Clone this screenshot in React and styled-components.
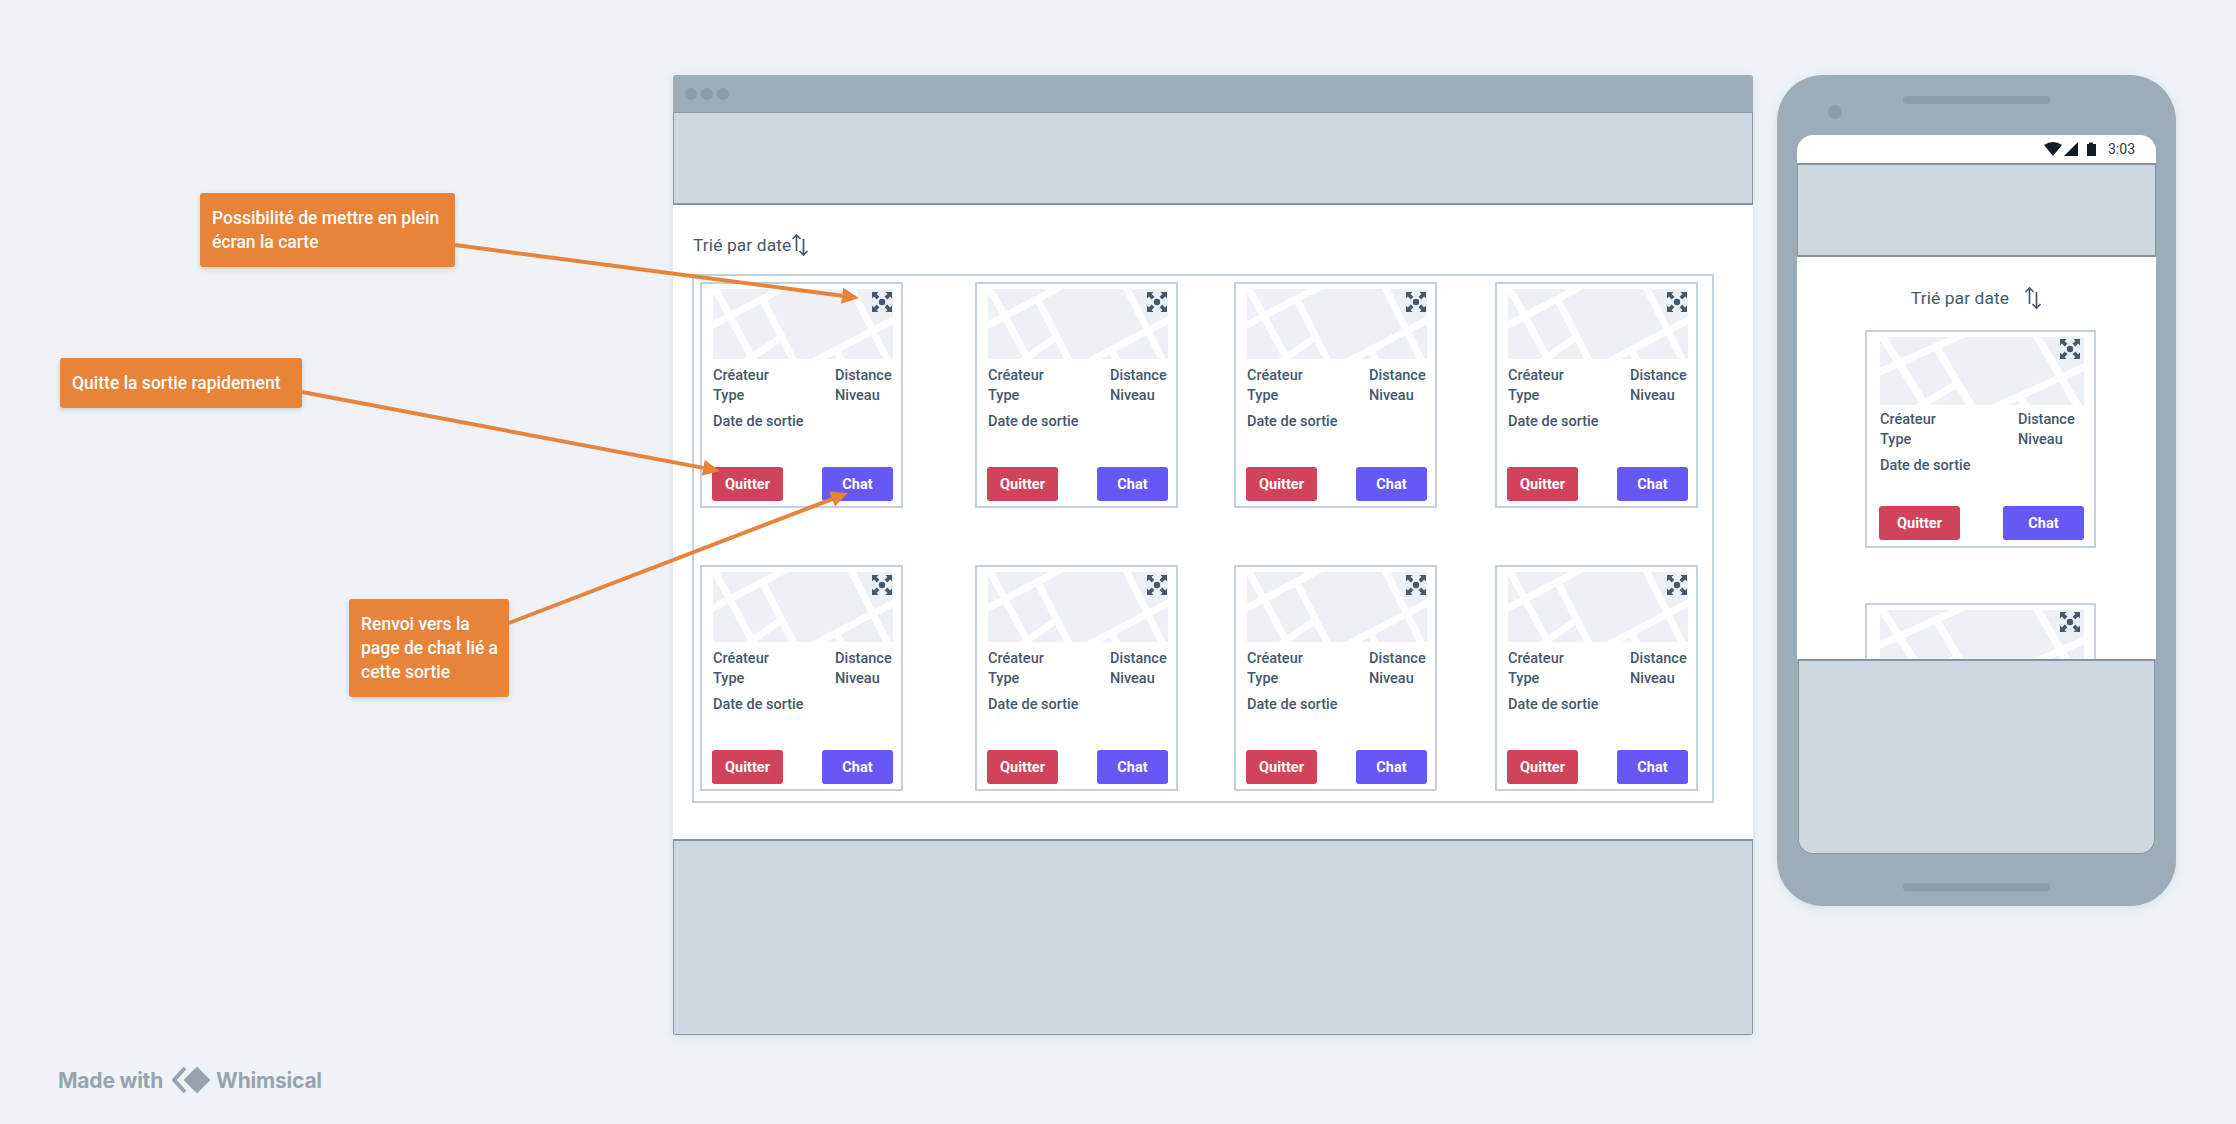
import React from "react";
import styled, { createGlobalStyle } from "styled-components";

const Global = createGlobalStyle`
  html, body { margin: 0; padding: 0; background: #eff3f7; }
  body { font-family: Roboto, "Liberation Sans", sans-serif; color: #47586b; }
  * { box-sizing: border-box; }
`;

const Stage = styled.div`
  position: relative;
  width: 2236px;
  height: 1124px;
  overflow: hidden;
  display: flex;
  align-items: flex-start;
  padding: 75px 0 0 673px;
  gap: 24px;
`;

const BrowserWindow = styled.div`
  width: 1080px;
  height: 960px;
  background: #fff;
  border-radius: 3px;
  box-shadow: 0 2px 8px rgba(60, 80, 100, 0.12);
  display: flex;
  flex-direction: column;
  overflow: hidden;
`;

const TitleBar = styled.div`
  height: 38px;
  flex: none;
  background: #9dacb9;
  border-bottom: 1px solid #8a9bab;
  display: flex;
  align-items: center;
  gap: 4px;
  padding: 0 12px;
`;

const Dot = styled.span`
  width: 12px;
  height: 12px;
  border-radius: 50%;
  background: #8c9cab;
`;

const Band = styled.div`
  flex: none;
  height: ${(p) => p.$h}px;
  background: #ced8e1;
  border: solid #8496a6;
  border-width: ${(p) => p.$edges || "0 1px 2px 1px"};
  border-radius: ${(p) => p.$radius || "0"};
  margin: ${(p) => p.$margin || "0"};
`;

const BrowserBody = styled.div`
  flex: 1;
  padding: 27px 0 0 19px;
  display: flex;
  flex-direction: column;
  align-items: flex-start;
`;

const SortRow = styled.div`
  display: flex;
  align-items: center;
  gap: ${(p) => p.$gap || 0}px;
  height: 26px;
  font-size: 17.4px;
  font-weight: 400;
  letter-spacing: 0.1px;
  margin: ${(p) => p.$margin || "0 0 16px 1px"};
`;

const CardFrame = styled.div`
  width: 1022px;
  height: 529px;
  border: 2px solid #c3d0de;
  padding: 6px 0 0 6px;
  display: grid;
  grid-template-columns: 275px 259px 261px 202px;
  grid-template-rows: 283px 226px;
`;

const Card = styled.div`
  position: relative;
  width: ${(p) => p.$w || 203}px;
  height: ${(p) => p.$h || 226}px;
  border: 2px solid #c3d0de;
  background: #fff;
  padding: ${(p) => p.$pad || "5px 8px 5px 11px"};
  display: flex;
  flex-direction: column;
  flex: none;
`;

const MapArt = styled.svg`
  display: block;
  width: 100%;
  height: ${(p) => p.$h || 70}px;
  flex: none;
`;

const ExpandIcon = styled.svg`
  position: absolute;
  top: ${(p) => p.$top || 8}px;
  right: ${(p) => p.$right || 9}px;
  width: 20px;
  height: 20px;
`;

const InfoGrid = styled.div`
  display: flex;
  justify-content: space-between;
  font-size: 14.5px;
  font-weight: 500;
  line-height: 20px;
  margin-top: ${(p) => p.$mt || 7}px;
`;

const InfoCol = styled.div`
  display: flex;
  flex-direction: column;
  width: ${(p) => p.$w || "auto"};
`;

const DateLine = styled.div`
  font-size: 14.5px;
  font-weight: 500;
  line-height: 20px;
  margin-top: 6px;
`;

const Actions = styled.div`
  margin-top: auto;
  margin-left: -1px;
  display: flex;
  justify-content: space-between;
`;

const Btn = styled.div`
  width: ${(p) => p.$w || 71}px;
  height: 34px;
  border-radius: 3px;
  background: ${(p) => (p.$kind === "red" ? "#d1435b" : "#6558f5")};
  color: #fff;
  font-size: 14.5px;
  font-weight: 700;
  display: flex;
  align-items: center;
  justify-content: center;
`;

const Phone = styled.div`
  position: relative;
  width: 399px;
  height: 831px;
  background: #9dacb9;
  border-radius: 46px;
  box-shadow: 0 2px 10px rgba(60, 80, 100, 0.12);
  padding: 60px 20px 0 20px;
  flex: none;
`;

const Speaker = styled.div`
  position: absolute;
  top: ${(p) => p.$top}px;
  left: 126px;
  width: 147px;
  height: 8px;
  border-radius: 4px;
  background: #8c9cab;
`;

const Camera = styled.div`
  position: absolute;
  top: 30px;
  left: 51px;
  width: 14px;
  height: 14px;
  border-radius: 50%;
  background: #8c9cab;
`;

const Screen = styled.div`
  width: 359px;
  height: 719px;
  border-radius: 16px;
  display: flex;
  flex-direction: column;
  overflow: hidden;
  position: relative;
`;

const StatusBar = styled.div`
  height: 28px;
  flex: none;
  background: #fff;
  display: flex;
  align-items: center;
  justify-content: flex-end;
  padding-right: 21px;
  font-size: 14px;
  color: #2c3a47;
`;

const StatusIcons = styled.svg`
  width: 52px;
  height: 14px;
  margin-right: 12px;
`;

const PhoneBody = styled.div`
  flex: none;
  height: 402px;
  background: #fff;
  overflow: hidden;
  display: flex;
  flex-direction: column;
  align-items: center;
  padding-top: 29px;
`;

const PhoneCards = styled.div`
  display: flex;
  flex-direction: column;
  gap: 55px;
  flex: none;
  margin-left: 8px;
`;

const Note = styled.div`
  position: absolute;
  left: ${(p) => p.$x}px;
  top: ${(p) => p.$y}px;
  width: ${(p) => p.$w}px;
  height: ${(p) => p.$h}px;
  background: #e8833a;
  border-radius: 3px;
  box-shadow: 0 2px 5px rgba(60, 80, 100, 0.22);
  color: #fff;
  font-size: 17.5px;
  font-weight: 500;
  line-height: 24px;
  padding: 0 8px 0 12px;
  display: flex;
  align-items: center;
`;

const Arrows = styled.svg`
  position: absolute;
  inset: 0;
  width: 2236px;
  height: 1124px;
  pointer-events: none;
`;

const Credit = styled.div`
  position: absolute;
  left: 58px;
  top: 1066px;
  height: 28px;
  display: flex;
  align-items: center;
  gap: 9px;
  font-family: Inter, "Liberation Sans", sans-serif;
  font-size: 21px;
  font-weight: 700;
  letter-spacing: -0.2px;
  color: #97a3ae;
`;

const LogoMark = styled.svg`
  width: 40px;
  height: 30px;
  margin-right: -5px;
`;

const MapIllustration = ({ h }) => (
  <MapArt $h={h} viewBox="0 0 180 70" preserveAspectRatio="none">
    <rect width="180" height="70" fill="#edf0f5" />
    <g stroke="#fff" strokeWidth="7" fill="none">
      <path d="M0 -4 L42 74" />
      <path d="M74 -3 L-4 38" />
      <path d="M51 13 L82 74" />
      <path d="M137 -4 L176 74" />
      <path d="M184 29 L98 74" />
      <path d="M70 47 L34 72" />
      <path d="M124 62 L130 74" />
    </g>
  </MapArt>
);

const Expand = ({ top, right }) => (
  <ExpandIcon $top={top} $right={right} viewBox="0 0 20 20">
    <circle cx="10" cy="10" r="3.2" fill="#47586b" />
    <g fill="#47586b">
      <path d="M0 0 H6.5 L4.6 1.9 L7.4 4.7 L4.7 7.4 L1.9 4.6 L0 6.5 Z" />
      <path d="M20 0 H13.5 L15.4 1.9 L12.6 4.7 L15.3 7.4 L18.1 4.6 L20 6.5 Z" />
      <path d="M0 20 H6.5 L4.6 18.1 L7.4 15.3 L4.7 12.6 L1.9 15.4 L0 13.5 Z" />
      <path d="M20 20 H13.5 L15.4 18.1 L12.6 15.3 L15.3 12.6 L18.1 15.4 L20 13.5 Z" />
    </g>
  </ExpandIcon>
);

const SortIcon = () => (
  <svg width="18" height="24" viewBox="0 0 18 24" fill="none" stroke="#47586b" strokeWidth="1.7">
    <path d="M5.5 18 V2 M1.5 6 L5.5 2 L9.5 6" />
    <path d="M12.5 6 V22 M8.5 18 L12.5 22 L16.5 18" />
  </svg>
);

const OutingCard = ({ phone, peek }) => (
  <Card $w={phone ? 231 : 203} $h={phone ? 218 : 226} $pad={phone ? "5px 10px 6px 13px" : undefined}>
    <MapIllustration h={phone ? 68 : 70} />
    <Expand top={phone ? 7 : 8} right={phone ? 14 : 9} />
    {!peek && (
      <>
        <InfoGrid $mt={phone ? 5 : 7}>
          <InfoCol>
            <span>Créateur</span>
            <span>Type</span>
          </InfoCol>
          <InfoCol $w={phone ? "66px" : "58px"}>
            <span>Distance</span>
            <span>Niveau</span>
          </InfoCol>
        </InfoGrid>
        <DateLine>Date de sortie</DateLine>
        <Actions>
          <Btn $kind="red" $w={phone ? 81 : 71}>Quitter</Btn>
          <Btn $w={phone ? 81 : 71}>Chat</Btn>
        </Actions>
      </>
    )}
  </Card>
);

const Head = ({ x1, y1, x2, y2 }) => {
  const a = Math.atan2(y2 - y1, x2 - x1);
  const len = 17;
  const half = 8;
  const bx = x2 - Math.cos(a) * len;
  const by = y2 - Math.sin(a) * len;
  const px = -Math.sin(a) * half;
  const py = Math.cos(a) * half;
  return (
    <>
      <line x1={x1} y1={y1} x2={bx} y2={by} stroke="#e8833a" strokeWidth="4" />
      <polygon points={`${x2},${y2} ${bx + px},${by + py} ${bx - px},${by - py}`} fill="#e8833a" />
    </>
  );
};

export default function App() {
  return (
    <>
      <Global />
      <Stage>
        <BrowserWindow>
          <TitleBar>
            <Dot />
            <Dot />
            <Dot />
          </TitleBar>
          <Band $h={92} />
          <BrowserBody>
            <SortRow>
              Trié par date
              <SortIcon />
            </SortRow>
            <CardFrame>
              {Array.from({ length: 8 }).map((_, i) => (
                <OutingCard key={i} />
              ))}
            </CardFrame>
          </BrowserBody>
          <Band $h={196} $edges="2px 1px 1px 1px" />
        </BrowserWindow>

        <Phone>
          <Speaker $top={21} />
          <Camera />
          <Speaker $top={808} />
          <Screen>
            <StatusBar>
              <StatusIcons viewBox="0 0 52 14">
                <path d="M0 3 Q9 -3 18 3 L9 14 Z" fill="#111c26" />
                <path d="M20 14 L34 0 V14 Z" fill="#111c26" />
                <path d="M43 2 H45 V0.5 H49 V2 H52 V14 H43 Z" fill="#111c26" />
              </StatusIcons>
              3:03
            </StatusBar>
            <Band $h={94} $edges="2px 1px 2px 1px" />
            <PhoneBody>
              <SortRow $gap={15} $margin="0 0 20px 0">
                Trié par date
                <SortIcon />
              </SortRow>
              <PhoneCards>
                <OutingCard phone />
                <OutingCard phone peek />
              </PhoneCards>
            </PhoneBody>
            <Band $h={195} $edges="2px 1px 1px 1px" $radius="0 0 15px 15px" $margin="0 1px" />
          </Screen>
        </Phone>

        <Note $x={200} $y={193} $w={255} $h={74}>
          <span>Possibilité de mettre en plein écran la carte</span>
        </Note>
        <Note $x={60} $y={358} $w={242} $h={50}>
          <span>Quitte la sortie rapidement</span>
        </Note>
        <Note $x={349} $y={599} $w={160} $h={98}>
          <span>Renvoi vers la page de chat lié a cette sortie</span>
        </Note>

        <Arrows viewBox="0 0 2236 1124">
          <Head x1={455} y1={245} x2={859} y2={298} />
          <Head x1={302} y1={392} x2={720} y2={471} />
          <Head x1={509} y1={623} x2={848} y2={493} />
        </Arrows>

        <Credit>
          <span>Made with</span>
          <LogoMark viewBox="0 0 40 30">
            <path d="M13 3 L2 15 L13 27" fill="none" stroke="#97a3ae" strokeWidth="4" strokeLinejoin="round" />
            <path d="M25 0.5 L39.5 15 L25 29.5 L10.5 15 Z" fill="#97a3ae" stroke="#eff3f7" strokeWidth="1.5" strokeLinejoin="round" />
          </LogoMark>
          <span>Whimsical</span>
        </Credit>
      </Stage>
    </>
  );
}
